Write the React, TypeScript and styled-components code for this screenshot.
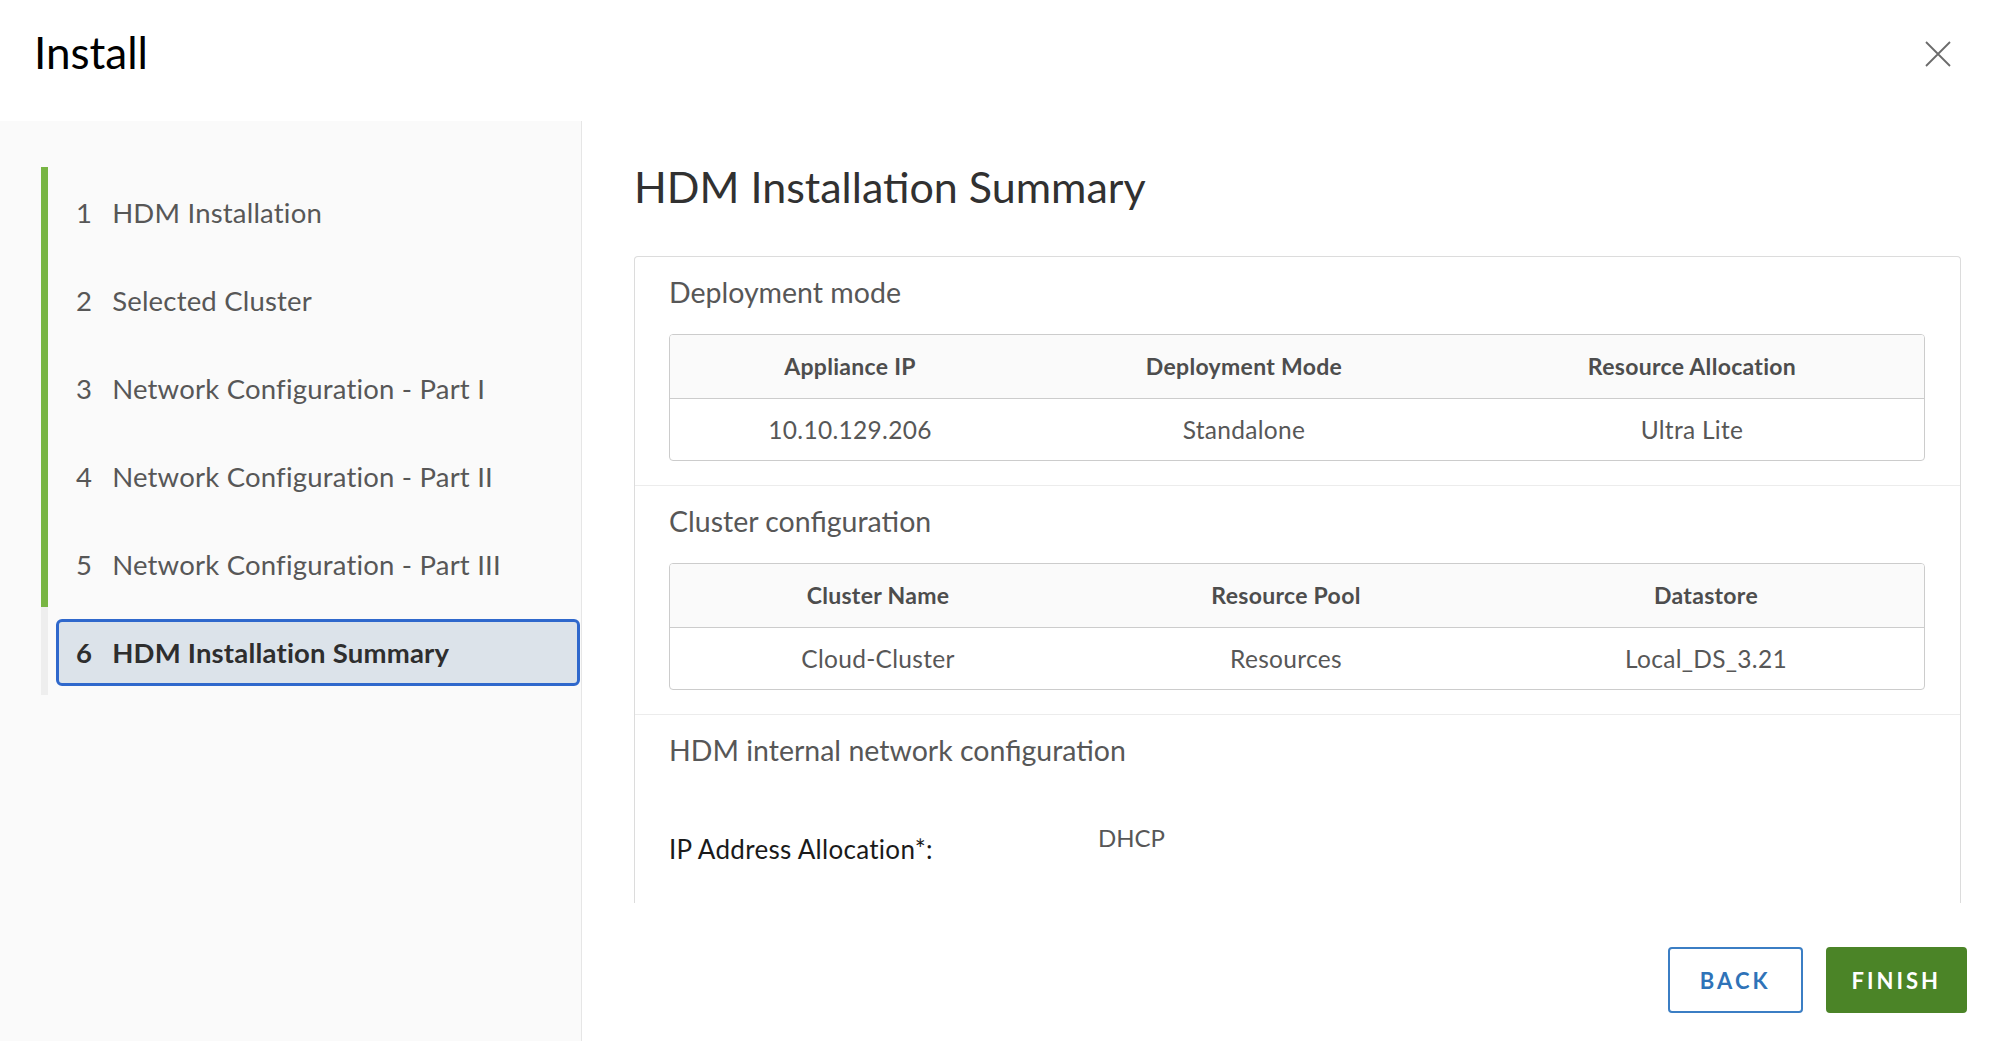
import React from "react";
import styled, { createGlobalStyle } from "styled-components";

const GlobalStyle = createGlobalStyle`
  html, body {
    margin: 0;
    padding: 0;
    background: #fff;
    font-family: Lato, "Noto Sans", sans-serif;
    -webkit-font-smoothing: antialiased;
  }
  * {
    box-sizing: border-box;
  }
`;

interface Step {
  num: number;
  label: string;
}

const steps: Step[] = [
  { num: 1, label: "HDM Installation" },
  { num: 2, label: "Selected Cluster" },
  { num: 3, label: "Network Configuration - Part I" },
  { num: 4, label: "Network Configuration - Part II" },
  { num: 5, label: "Network Configuration - Part III" },
  { num: 6, label: "HDM Installation Summary" },
];

const activeStep = 6;

interface Column {
  title: string;
  value: string;
  width: number;
}

const deploymentCols: Column[] = [
  { title: "Appliance IP", value: "10.10.129.206", width: 360 },
  { title: "Deployment Mode", value: "Standalone", width: 428 },
  { title: "Resource Allocation", value: "Ultra Lite", width: 468 },
];

const clusterCols: Column[] = [
  { title: "Cluster Name", value: "Cloud-Cluster", width: 416 },
  { title: "Resource Pool", value: "Resources", width: 400 },
  { title: "Datastore", value: "Local_DS_3.21", width: 440 },
];

const SummaryTable = ({ cols }: { cols: Column[] }) => (
  <TableFrame>
    <Table>
      <colgroup>
        {cols.map((c) => (
          <Col key={c.title} $w={c.width} />
        ))}
      </colgroup>
      <thead>
        <tr>
          {cols.map((c) => (
            <Th key={c.title}>{c.title}</Th>
          ))}
        </tr>
      </thead>
      <tbody>
        <tr>
          {cols.map((c) => (
            <Td key={c.title}>{c.value}</Td>
          ))}
        </tr>
      </tbody>
    </Table>
  </TableFrame>
);

export default function App() {
  return (
    <>
      <GlobalStyle />
      <Modal>
        <Header>
          <Title>Install</Title>
          <CloseButton aria-label="Close">
            <svg width="26" height="26" viewBox="0 0 26 26">
              <path
                d="M1 1 L25 25 M25 1 L1 25"
                stroke="#6b6b6b"
                strokeWidth="1.8"
                fill="none"
              />
            </svg>
          </CloseButton>
        </Header>
        <Body>
          <Sidebar>
            <StepList>
              {steps.map((s) => (
                <StepRow key={s.num} $done={s.num < activeStep}>
                  <StepItem $active={s.num === activeStep}>
                    <StepNum>{s.num}</StepNum>
                    <StepLabel>{s.label}</StepLabel>
                  </StepItem>
                </StepRow>
              ))}
            </StepList>
          </Sidebar>
          <Main>
            <Heading>HDM Installation Summary</Heading>
            <Card>
              <Section>
                <SectionTitle>Deployment mode</SectionTitle>
                <SummaryTable cols={deploymentCols} />
              </Section>
              <Section>
                <SectionTitle>Cluster configuration</SectionTitle>
                <SummaryTable cols={clusterCols} />
              </Section>
              <Section $last>
                <SectionTitle>HDM internal network configuration</SectionTitle>
                <FormRow>
                  <FormLabel>IP Address Allocation*:</FormLabel>
                  <FormValue>DHCP</FormValue>
                </FormRow>
              </Section>
            </Card>
            <Footer>
              <Button $variant="outline">BACK</Button>
              <Button $variant="success">FINISH</Button>
            </Footer>
          </Main>
        </Body>
      </Modal>
    </>
  );
}

const Modal = styled.div`
  display: flex;
  flex-direction: column;
  width: 1999px;
  height: 1041px;
  background: #fff;
  overflow: hidden;
`;

const Header = styled.div`
  display: flex;
  justify-content: space-between;
  align-items: flex-start;
  height: 121px;
  flex-shrink: 0;
  padding: 24px 48px 0 34px;
`;

const Title = styled.h1`
  margin: 0;
  font-family: Lato, sans-serif;
  font-size: 44px;
  font-weight: 400;
  line-height: 56px;
  color: #000;
`;

const CloseButton = styled.button`
  display: flex;
  margin-top: 17px;
  padding: 0;
  border: none;
  background: transparent;
  cursor: pointer;
`;

const Body = styled.div`
  display: flex;
  flex: 1;
  min-height: 0;
`;

const Sidebar = styled.div`
  width: 582px;
  flex-shrink: 0;
  background: #fafafa;
  border-right: 1px solid #e6e6e6;
  padding: 46px 1px 0 41px;
`;

const StepList = styled.div`
  display: flex;
  flex-direction: column;
`;

const StepRow = styled.div<{ $done: boolean }>`
  display: flex;
  align-items: center;
  height: 88px;
  padding: 2px 0 0 8px;
  border-left: 7px solid ${(p) => (p.$done ? "#78b543" : "#eeeeee")};
`;

const StepItem = styled.div<{ $active: boolean }>`
  display: flex;
  align-items: center;
  gap: 20px;
  width: 100%;
  height: 67px;
  padding: 0 17px;
  border-radius: 6px;
  border: 3px solid ${(p) => (p.$active ? "#2f68cc" : "transparent")};
  background: ${(p) => (p.$active ? "#dce3ea" : "transparent")};
  color: ${(p) => (p.$active ? "#2e2e2e" : "#575757")};
  font-family: Lato, sans-serif;
  font-size: 27.5px;
  font-weight: ${(p) => (p.$active ? 700 : 400)};
  letter-spacing: 0.2px;
`;

const StepNum = styled.span`
  min-width: 14px;
`;

const StepLabel = styled.span`
  white-space: nowrap;
`;

const Main = styled.div`
  display: flex;
  flex-direction: column;
  flex: 1;
  min-width: 0;
  padding: 40px 32px 28px 52px;
`;

const Heading = styled.h2`
  margin: 0 0 43px;
  font-family: Lato, sans-serif;
  font-size: 43px;
  font-weight: 400;
  line-height: 52px;
  color: #313131;
`;

const Card = styled.div`
  width: 1327px;
  height: 647px;
  flex-shrink: 0;
  border: 1px solid #dcdcdc;
  border-bottom: none;
  border-radius: 4px 4px 0 0;
  overflow: hidden;
`;

const Section = styled.div<{ $last?: boolean }>`
  padding: 18px 35px 24px 34px;
  border-bottom: ${(p) => (p.$last ? "none" : "1px solid #ececec")};
`;

const SectionTitle = styled.div`
  font-family: Lato, sans-serif;
  font-size: 28.5px;
  line-height: 34px;
  color: #575757;
  margin-bottom: 25px;
`;

const TableFrame = styled.div`
  border: 1px solid #cccccc;
  border-radius: 4px;
  overflow: hidden;
`;

const Table = styled.table`
  width: 100%;
  border-collapse: collapse;
  table-layout: fixed;
`;

const Col = styled.col<{ $w: number }>`
  width: ${(p) => p.$w}px;
`;

const Th = styled.th`
  height: 63px;
  padding: 0 12px;
  background: #fafafa;
  border-bottom: 1px solid #cccccc;
  font-family: Lato, sans-serif;
  font-size: 23px;
  font-weight: 700;
  color: #4d4d4d;
  text-align: center;
  letter-spacing: 0.3px;
`;

const Td = styled.td`
  height: 62px;
  padding: 0 12px;
  font-family: Lato, sans-serif;
  font-size: 24.5px;
  color: #575757;
  text-align: center;
  letter-spacing: 0.3px;
`;

const FormRow = styled.div`
  display: grid;
  grid-template-columns: 429px 1fr;
  margin-top: 56px;
`;

const FormLabel = styled.div`
  margin-top: 11px;
  font-family: Lato, sans-serif;
  font-size: 26px;
  line-height: 30px;
  color: #1a1a1a;
  letter-spacing: 0.3px;
`;

const FormValue = styled.div`
  font-family: Lato, sans-serif;
  font-size: 24px;
  line-height: 30px;
  color: #575757;
`;

const Footer = styled.div`
  display: flex;
  justify-content: flex-end;
  align-items: flex-end;
  gap: 23px;
  flex: 1;
`;

const Button = styled.button<{ $variant: "outline" | "success" }>`
  height: 66px;
  padding: 0 ${(p) => (p.$variant === "outline" ? "30px" : "24px")};
  border-radius: 4px;
  border: 2px solid ${(p) => (p.$variant === "outline" ? "#3b7ec4" : "#4b8427")};
  background: ${(p) => (p.$variant === "outline" ? "#fff" : "#4b8427")};
  color: ${(p) => (p.$variant === "outline" ? "#2f73b8" : "#fff")};
  font-family: Lato, sans-serif;
  font-size: 22px;
  font-weight: 700;
  letter-spacing: 3px;
  cursor: pointer;
`;
